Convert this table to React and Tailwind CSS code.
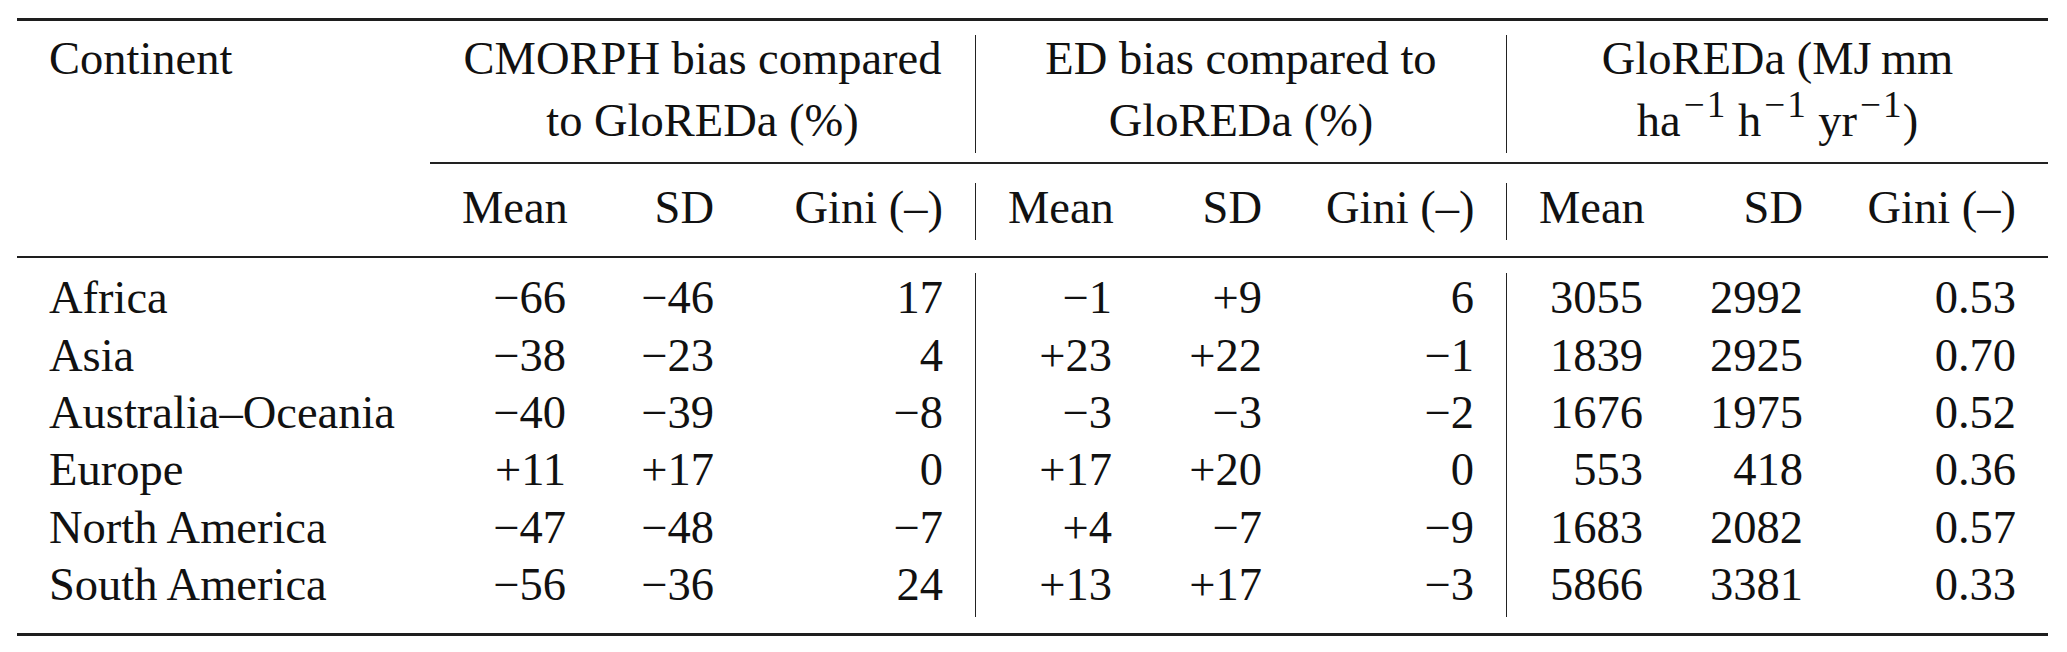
import React from "react";

const cols = "grid grid-cols-[413px_168px_148px_230px_168px_150px_213px_168px_160px_213px]";

const rows = [
  ["Africa", "−66", "−46", "17", "−1", "+9", "6", "3055", "2992", "0.53"],
  ["Asia", "−38", "−23", "4", "+23", "+22", "−1", "1839", "2925", "0.70"],
  ["Australia–Oceania", "−40", "−39", "−8", "−3", "−3", "−2", "1676", "1975", "0.52"],
  ["Europe", "+11", "+17", "0", "+17", "+20", "0", "553", "418", "0.36"],
  ["North America", "−47", "−48", "−7", "+4", "−7", "−9", "1683", "2082", "0.57"],
  ["South America", "−56", "−36", "24", "+13", "+17", "−3", "5866", "3381", "0.33"],
];

const sub = ["Mean", "SD", "Gini (–)"];

// cells that carry the vertical bar on their right side
const barred = (i) => i === 3 || i === 6;

function Cell({ i, children }) {
  return (
    <div
      className={
        "h-[57.33px] px-[32px] leading-[49px] whitespace-nowrap " +
        (i === 0 ? "text-left " : "text-right ") +
        (barred(i) ? "border-r-[1.5px] border-[#222]" : "")
      }
    >
      {children}
    </div>
  );
}

// preflight already lifts <sup>; math minus is set a bit wider, like TeX
function Sup() {
  return (
    <sup className="text-[0.8em] pl-[3px] pr-[1px]">
      <span className="mr-[2px]">−</span>1
    </sup>
  );
}

export default function App() {
  return (
    <div className="min-h-[652px] bg-white pl-[17px] pt-[18px] text-[#111] font-['Liberation_Serif','Times_New_Roman',serif] text-[46.5px]">
      <div className="w-[2031px]">
        <div className="h-[2.5px] bg-[#1e1e1e]" />

        {/* group header */}
        <div className={cols + " mt-[14.5px]"}>
          <div className="h-[118px] px-[32px]">
            <div className="-mt-[7px] leading-[62px]">Continent</div>
          </div>
          <div className="col-span-3 h-[118px] px-[32px] text-center border-r-[1.5px] border-[#222]">
            <div className="-mt-[7px] leading-[62px]">
              CMORPH bias compared
              <br />
              to GloREDa (%)
            </div>
          </div>
          <div className="col-span-3 h-[118px] px-[32px] text-center border-r-[1.5px] border-[#222]">
            <div className="-mt-[7px] leading-[62px]">
              ED bias compared to
              <br />
              GloREDa (%)
            </div>
          </div>
          <div className="col-span-3 h-[118px] px-[32px] text-center">
            <div className="-mt-[7px] leading-[62px] whitespace-nowrap">
              GloREDa (MJ{"\u2009"}mm
              <br />
              ha<Sup /> h<Sup /> yr<Sup />)
            </div>
          </div>
        </div>

        <div className={cols + " mt-[9px]"}>
          <div />
          <div className="col-span-9 h-[1.5px] bg-[#222]" />
        </div>

        {/* sub header */}
        <div className={cols + " mt-[19.5px]"}>
          {["", ...sub, ...sub, ...sub].map((t, i) => (
            <Cell key={i} i={i}>
              {t}
            </Cell>
          ))}
        </div>

        <div className="mt-[16px] h-[2px] bg-[#1e1e1e]" />

        {/* body */}
        <div className="mt-[15px]">
          {rows.map((r) => (
            <div key={r[0]} className={cols}>
              {r.map((t, i) => (
                <Cell key={i} i={i}>
                  {t}
                </Cell>
              ))}
            </div>
          ))}
        </div>

        <div className="mt-[16px] h-[2.5px] bg-[#1e1e1e]" />
      </div>
    </div>
  );
}
